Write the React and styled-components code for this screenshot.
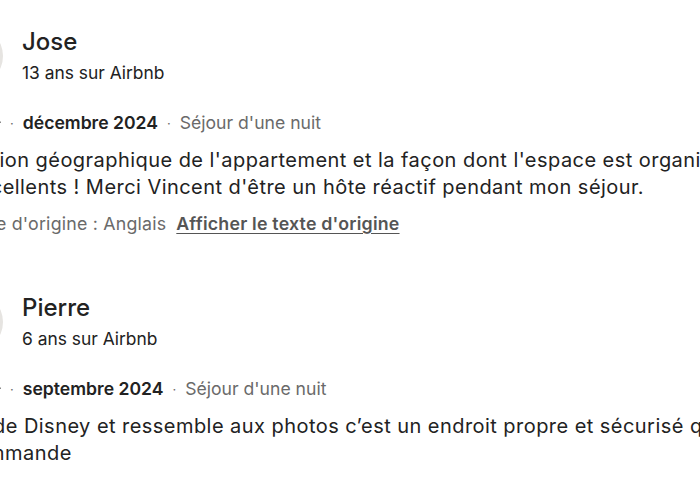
import React from 'react';
import styled, { createGlobalStyle } from 'styled-components';

const GlobalStyle = createGlobalStyle`
  html, body {
    margin: 0;
    padding: 0;
    background: #ffffff;
    font-family: Inter, "Liberation Sans", sans-serif;
    color: #222222;
  }
`;

const Page = styled.div`
  width: 700px;
  height: 500px;
  overflow: hidden;
  padding-top: 26px;
  box-sizing: border-box;
`;

// the view is scrolled sideways: the left of the column lies off screen
const List = styled.div`
  margin-left: -57px;
  display: flex;
  flex-direction: column;
  gap: 56px;
`;

const Review = styled.div`
  display: flex;
  flex-direction: column;
`;

const Header = styled.div`
  display: flex;
  align-items: center;
  gap: 19px;
`;

const Avatar = styled.div`
  width: 60px;
  height: 60px;
  border-radius: 50%;
  background: #e6e4e1;
  flex-shrink: 0;
`;

const Who = styled.div`
  display: flex;
  flex-direction: column;
`;

const Name = styled.div`
  font-size: 24px;
  font-weight: 500;
  line-height: 30px;
`;

const Since = styled.div`
  font-size: 17.4px;
  line-height: 24px;
  margin-top: 4px;
`;

const Meta = styled.div`
  display: flex;
  align-items: center;
  gap: 9px;
  margin-top: 26px;
  font-size: 17.6px;
  line-height: 22px;
`;

const Stars = styled.span`
  display: flex;
  gap: 2px;
`;

const Dot = styled.span`
  color: #6a6a6a;
  font-size: 13px;
`;

const Date = styled.span`
  font-weight: 600;
`;

const Stay = styled.span`
  color: #6a6a6a;
`;

const Body = styled.p`
  margin: 13px 0 0;
  font-size: 20px;
  letter-spacing: 0.45px;
  line-height: 27px;
  white-space: nowrap;
`;

const Translation = styled.div`
  display: flex;
  gap: 10px;
  margin-top: 11px;
  font-size: 17.8px;
  letter-spacing: 0.2px;
  line-height: 24px;
  color: #6a6a6a;
`;

const Link = styled.a`
  color: #555555;
  font-weight: 600;
  text-decoration: underline;
  text-underline-offset: 3px;
`;

const Star = () => (
  <svg width="10" height="10" viewBox="0 0 32 32" fill="#222">
    <path d="M15.1 1.58l-4.13 8.88-9.86 1.27a1 1 0 0 0-.54 1.74l7.3 6.57-1.97 9.85a1 1 0 0 0 1.48 1.06l8.62-5 8.63 5a1 1 0 0 0 1.48-1.06l-1.97-9.85 7.3-6.57a1 1 0 0 0-.55-1.73l-9.86-1.28-4.12-8.88a1 1 0 0 0-1.82 0z" />
  </svg>
);

const reviews = [
  {
    name: 'Jose',
    since: '13 ans sur Airbnb',
    date: 'décembre 2024',
    lines: [
      "Situation géographique de l'appartement et la façon dont l'espace est organisé",
      "et excellents ! Merci Vincent d'être un hôte réactif pendant mon séjour.",
    ],
    translated: true,
  },
  {
    name: 'Pierre',
    since: '6 ans sur Airbnb',
    date: 'septembre 2024',
    lines: [
      "Près de Disney et ressemble aux photos c’est un endroit propre et sécurisé que je",
      'recommande',
    ],
  },
];

const App = () => (
  <>
    <GlobalStyle />
    <Page>
      <List>
        {reviews.map(r => (
          <Review key={r.name}>
            <Header>
              <Avatar />
              <Who>
                <Name>{r.name}</Name>
                <Since>{r.since}</Since>
              </Who>
            </Header>
            <Meta>
              <Stars>
                {[0, 1, 2, 3, 4].map(i => <Star key={i} />)}
              </Stars>
              <Dot>·</Dot>
              <Date>{r.date}</Date>
              <Dot>·</Dot>
              <Stay>Séjour d'une nuit</Stay>
            </Meta>
            <Body>
              {r.lines.map((l, i) => (
                <React.Fragment key={i}>
                  {l}
                  {i < r.lines.length - 1 && <br />}
                </React.Fragment>
              ))}
            </Body>
            {r.translated && (
              <Translation>
                <span>Langue d'origine : Anglais</span>
                <Link>Afficher le texte d'origine</Link>
              </Translation>
            )}
          </Review>
        ))}
      </List>
    </Page>
  </>
);

export default App;
